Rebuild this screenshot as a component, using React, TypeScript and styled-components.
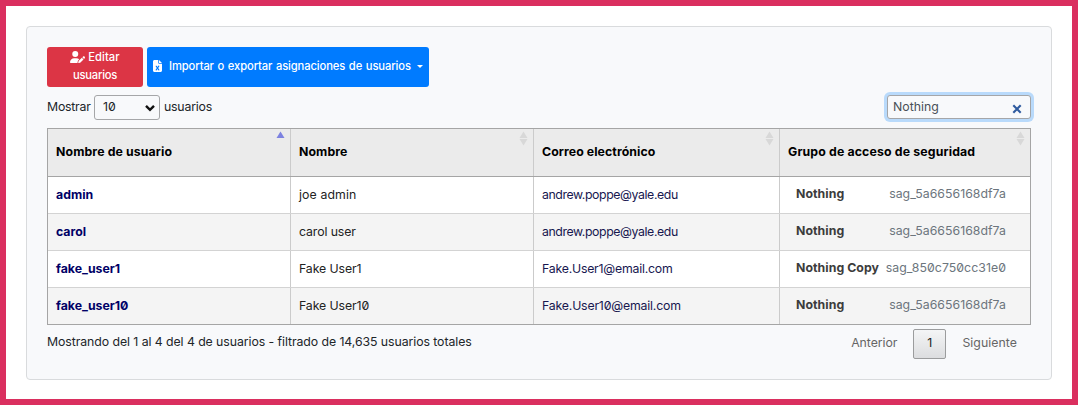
import React from 'react';
import styled, { createGlobalStyle } from 'styled-components';
import { FaUserPen, FaFileExcel } from 'react-icons/fa6';

const GlobalStyle = createGlobalStyle`
  *, *::before, *::after { box-sizing: border-box; }
  body {
    margin: 0;
    background: #fff;
    color: #212529;
    font: 12.3px/18px Inter, 'Liberation Sans', sans-serif;
    font-feature-settings: 'zero' 1, 'calt' 0;
  }
  button, input, select { font: inherit; letter-spacing: inherit; font-feature-settings: inherit; }
`;

const Frame = styled.main`
  height: 405px;
  padding: 20px;
  border: 6px solid #da2f5f;
`;

const Card = styled.section`
  height: 354px;
  padding: 20px;
  background: #f8f9fb;
  border: 1px solid #d9dbdd;
  border-radius: 4px;
`;

const Text = styled.span<{ $track?: number }>`
  letter-spacing: ${(p) => p.$track ?? 0}px;
  white-space: nowrap;
`;

const Actions = styled.div`
  display: flex;
  gap: 4px;
  height: 40px;
`;

const ActionButton = styled.button<{ $tone: string; $width: number }>`
  display: flex;
  align-items: center;
  width: ${(p) => p.$width}px;
  padding: 0 6px 2px;
  border: 0;
  border-radius: 3px;
  background: ${(p) => p.$tone};
  color: #fff;
  font-size: 11.2px;
  font-weight: 550;
  line-height: 18px;
  word-spacing: 0.8px;
`;

const TwoLines = styled.span`
  display: flex;
  flex-direction: column;
  align-items: center;
  width: 100%;
`;

const IconLine = styled.span`
  display: flex;
  align-items: center;
  gap: 3px;
  svg { width: 15px; height: 12px; }
`;

const FileIcon = styled(FaFileExcel)`
  width: 9px;
  height: 12px;
  margin-right: 7px;
`;

const Caret = styled.span`
  margin-left: 6px;
  border: 3px solid transparent;
  border-top-color: #fff;
  border-bottom: 0;
`;

const Controls = styled.div`
  display: flex;
  align-items: center;
  justify-content: space-between;
  height: 25px;
  margin: 8px 0;
`;

const LengthLabel = styled.label`
  display: flex;
  align-items: center;
  gap: 4px;
  > ${Text} { padding-bottom: 2px; }
  > ${Text}:first-child { width: 43px; }
`;

const SelectBox = styled.span`
  display: grid;
  grid-template-columns: 50px 16px;
  align-items: center;
  width: 66px;
  svg { grid-area: 1 / 2; pointer-events: none; }
`;

const Select = styled.select`
  grid-area: 1 / 1 / 2 / 3;
  height: 25px;
  padding: 0 8px 2px;
  appearance: none;
  border: 1px solid #a5a6a8;
  border-radius: 3px;
  background: transparent;
  color: #212529;
`;

const SearchBox = styled.label`
  display: flex;
  align-items: center;
  align-self: flex-start;
  width: 144px;
  height: 24px;
  padding: 0 8px 0 5px;
  border: 1px solid #a5a6a8;
  border-radius: 3px;
  background: #f8f9fb;
  box-shadow: 0 0 0 3px #b9dafb;
  svg { margin-top: 4px; flex: none; }
`;

const SearchInput = styled.input`
  flex: 1;
  min-width: 0;
  padding: 0;
  border: 0;
  outline: 0;
  background: transparent;
  color: #495057;
`;

const Table = styled.div`
  height: 197px;
  border: 1px solid #a5a5a5;
`;

const Row = styled.div<{ $shade?: boolean }>`
  display: grid;
  grid-template-columns: 243px 243px 246px 250px;
  height: 37px;
  background: ${(p) => (p.$shade ? '#f4f4f4' : '#fff')};
  border-bottom: 1px solid #d3d3d3;
  &:last-child { height: 36px; border-bottom: 0; }
`;

const HeadRow = styled(Row)`
  height: 48px;
  background: #ebebeb;
  border-bottom-color: #a5a5a5;
`;

const Cell = styled.div`
  display: flex;
  align-items: center;
  padding-left: 8px;
  color: #222;
  &:not(:last-child) { border-right: 1px solid #cbcbcb; }
`;

const HeadCell = styled(Cell)`
  justify-content: space-between;
  color: #000;
  font-weight: 700;
  ${Text} { padding-bottom: 2px; }
  svg { align-self: flex-start; margin: 2px 5px 0 0; flex: none; }
`;

const UserName = styled(Text)`
  color: #000066;
  font-weight: 700;
`;

const Email = styled(Text)`
  color: #17174f;
`;

const GroupCell = styled(Cell)`
  justify-content: space-between;
  padding: 0 24px 2px 16px;
`;

const GroupName = styled(Text)`
  color: #3c3c3c;
  font-weight: 700;
`;

const GroupId = styled(Text)`
  color: #6c757d;
`;

const Footer = styled.div`
  display: flex;
  justify-content: space-between;
  align-items: flex-start;
  padding-top: 4px;
`;

const Summary = styled(Text)`
  padding-top: 4px;
`;

const Pager = styled.nav`
  display: flex;
  align-items: center;
  gap: 16px;
  padding-right: 14px;
  color: #666;
  > ${Text} { padding-bottom: 2px; }
`;

const PageButton = styled.button`
  width: 33px;
  height: 30px;
  padding: 0 0 2px;
  border: 1px solid #9b9c9d;
  border-radius: 2px;
  background: linear-gradient(#f4f5f6, #dcdddf);
  color: #222;
`;

const SortIcon = ({ active }: { active?: boolean }) => (
  <svg width="9" height="15" viewBox="0 0 9 15">
    <path d="M4.5 0.5 8.5 7h-8z" fill={active ? '#7d82e0' : '#d8d8d8'} />
    {!active && <path d="M4.5 14.5 8.5 8h-8z" fill="#d8d8d8" />}
  </svg>
);

const columns = [
  { label: 'Nombre de usuario', track: 0.12, active: true },
  { label: 'Nombre', track: 0.1 },
  { label: 'Correo electrónico', track: 0.08 },
  { label: 'Grupo de acceso de seguridad', track: 0.15 },
];

const YALE = { address: 'andrew.poppe@yale.edu', track: -0.4 };
const NOTHING = { name: 'Nothing', id: 'sag_5a6656168df7a', idTrack: 0.03 };

const users = [
  { user: 'admin', name: 'joe admin', nameTrack: 0.1, email: YALE, group: NOTHING },
  { user: 'carol', name: 'carol user', nameTrack: -0.1, email: YALE, group: NOTHING },
  {
    user: 'fake_user1', name: 'Fake User1', nameTrack: -0.1,
    email: { address: 'Fake.User1@email.com', track: -0.22 },
    group: { name: 'Nothing Copy', id: 'sag_850c750cc31e0', idTrack: 0.05 },
  },
  {
    user: 'fake_user10', name: 'Fake User10', nameTrack: -0.1,
    email: { address: 'Fake.User10@email.com', track: -0.18 },
    group: NOTHING,
  },
];

export default function App() {
  return (
    <>
      <GlobalStyle />
      <Frame>
        <Card>
          <Actions>
            <ActionButton $tone="#dc3545" $width={96}>
              <TwoLines>
                <IconLine>
                  <FaUserPen />
                  <Text $track={0.05}>Editar</Text>
                </IconLine>
                <Text $track={-0.22}>usuarios</Text>
              </TwoLines>
            </ActionButton>
            <ActionButton $tone="#007bff" $width={282}>
              <FileIcon />
              <Text $track={-0.11}>Importar o exportar asignaciones de usuarios</Text>
              <Caret />
            </ActionButton>
          </Actions>

          <Controls>
            <LengthLabel>
              <Text $track={-0.23}>Mostrar</Text>
              <SelectBox>
                <Select defaultValue="10">
                  <option>10</option>
                </Select>
                <svg width="12" height="8" viewBox="0 0 12 8">
                  <path d="M2 1.8 6 5.8 10 1.8" fill="none" stroke="#111" strokeWidth="2.4" />
                </svg>
              </SelectBox>
              <Text $track={-0.2}>usuarios</Text>
            </LengthLabel>
            <SearchBox>
              <SearchInput defaultValue="Nothing" />
              <svg width="10" height="10" viewBox="0 0 10 10">
                <path d="M1.3 1.3 8.7 8.7M8.7 1.3 1.3 8.7" stroke="#2f5b9f" strokeWidth="2.1" />
              </svg>
            </SearchBox>
          </Controls>

          <Table>
            <HeadRow>
              {columns.map((c) => (
                <HeadCell key={c.label}>
                  <Text $track={c.track}>{c.label}</Text>
                  <SortIcon active={c.active} />
                </HeadCell>
              ))}
            </HeadRow>
            {users.map((u, i) => (
              <Row key={u.user} $shade={i % 2 === 1}>
                <Cell><UserName $track={0.01}>{u.user}</UserName></Cell>
                <Cell><Text $track={u.nameTrack}>{u.name}</Text></Cell>
                <Cell><Email $track={u.email.track}>{u.email.address}</Email></Cell>
                <GroupCell>
                  <GroupName $track={0.05}>{u.group.name}</GroupName>
                  <GroupId $track={u.group.idTrack}>{u.group.id}</GroupId>
                </GroupCell>
              </Row>
            ))}
          </Table>

          <Footer>
            <Summary $track={-0.07}>
              Mostrando del 1 al 4 del 4 de usuarios - filtrado de 14,635 usuarios totales
            </Summary>
            <Pager>
              <Text $track={-0.05}>Anterior</Text>
              <PageButton>1</PageButton>
              <Text $track={0.05}>Siguiente</Text>
            </Pager>
          </Footer>
        </Card>
      </Frame>
    </>
  );
}
